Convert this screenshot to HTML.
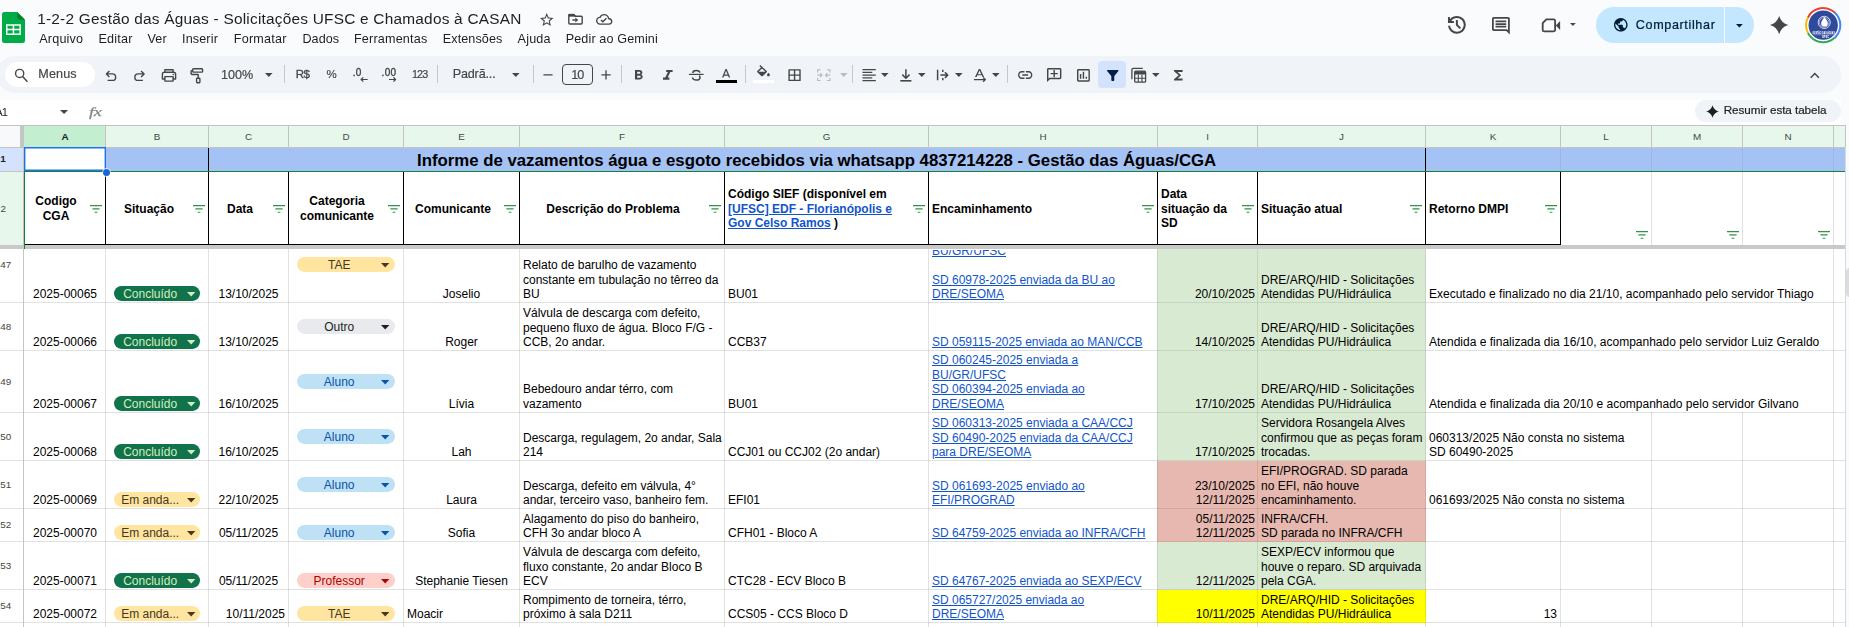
<!DOCTYPE html>
<html lang="pt-BR"><head><meta charset="utf-8"><title>1-2-2 Gestão das Águas - Solicitações UFSC e Chamados à CASAN</title>
<style>
*{box-sizing:border-box;margin:0;padding:0}
html,body{width:1849px;height:627px;overflow:hidden;background:#f9fbfd;font-family:"Liberation Sans",sans-serif;color:#1f1f1f}
#root{position:relative;width:1849px;height:627px;overflow:hidden;background:#f9fbfd}
#chrome{position:absolute;left:0;top:0;width:1849px;height:125px;will-change:transform}
.abs{position:absolute}
.ic{position:absolute;display:block;overflow:visible}
.t{position:absolute;white-space:nowrap}
.sep{position:absolute;top:65px;width:1px;height:18px;background:#c7c7c7}
.cell{position:absolute;display:flex;align-items:flex-end;font-size:12px;line-height:14px;color:#000;padding:0 3px 1px 3px;overflow:hidden;white-space:nowrap}
.ln{height:14px;line-height:14px}
.cell.c{justify-content:center;text-align:center}
.cell.r{justify-content:flex-end;text-align:right}
.cell a,.lnk{color:#1155cc;text-decoration:underline}
.hl{position:absolute;height:1px}
.vl{position:absolute;width:1px}
.ct{position:absolute;height:14px;font-size:12px;line-height:14px;text-align:center;white-space:nowrap}
.colh{position:absolute;top:126px;height:21px}
.rowh{position:absolute;left:0;width:23px;background:#e8f7ec}
.hd{position:absolute;height:14px;font-size:12px;line-height:14px;font-weight:bold;color:#000;white-space:nowrap}
.fic{position:absolute;width:12px;height:8px}
</style></head><body><div id="root">

<div class="abs" style="left:0;top:126px;width:1845px;height:501px;background:#fff"></div>
<div class="abs" style="left:1845px;top:126px;width:4px;height:501px;background:#f9fbfd"></div>
<div class="abs" style="left:1845px;top:126px;width:1px;height:501px;background:#d9d9d9"></div>
<div class="abs" style="left:1846px;top:268px;width:10px;height:29px;border-radius:4px;background:#dadce0"></div>
<div class="abs" style="left:0;top:126px;width:21px;height:21px;background:#f8f9fa"></div>
<div class="colh" style="left:24px;width:81px;background:#c3eed0"></div>
<div class="t" id="chA" style="left:61.53px;top:131px;font-size:9.9px;line-height:11.88px;color:#202124;letter-spacing:-0.01px;font-weight:bold;">A</div>
<div class="colh" style="left:105px;width:103px;background:#e8f7ec"></div>
<div class="t" id="chB" style="left:153.8px;top:131px;font-size:9.9px;line-height:11.88px;color:#444746;letter-spacing:-0.004px;">B</div>
<div class="colh" style="left:208px;width:80px;background:#e8f7ec"></div>
<div class="t" id="chC" style="left:245.03px;top:131px;font-size:9.9px;line-height:11.88px;color:#444746;letter-spacing:-0.01px;">C</div>
<div class="colh" style="left:288px;width:115px;background:#e8f7ec"></div>
<div class="t" id="chD" style="left:342.53px;top:131px;font-size:9.9px;line-height:11.88px;color:#444746;letter-spacing:-0.01px;">D</div>
<div class="colh" style="left:403px;width:116px;background:#e8f7ec"></div>
<div class="t" id="chE" style="left:458.3px;top:131px;font-size:9.9px;line-height:11.88px;color:#444746;letter-spacing:-0.004px;">E</div>
<div class="colh" style="left:519px;width:205px;background:#e8f7ec"></div>
<div class="t" id="chF" style="left:619.08px;top:131px;font-size:9.9px;line-height:11.88px;color:#444746;letter-spacing:-0.008px;">F</div>
<div class="colh" style="left:724px;width:204px;background:#e8f7ec"></div>
<div class="t" id="chG" style="left:822.75px;top:131px;font-size:9.9px;line-height:11.88px;color:#444746;letter-spacing:-0.0px;">G</div>
<div class="colh" style="left:928px;width:229px;background:#e8f7ec"></div>
<div class="t" id="chH" style="left:1039.53px;top:131px;font-size:9.9px;line-height:11.88px;color:#444746;letter-spacing:-0.01px;">H</div>
<div class="colh" style="left:1157px;width:100px;background:#e8f7ec"></div>
<div class="t" id="chI" style="left:1206.22px;top:131px;font-size:9.9px;line-height:11.88px;color:#444746;letter-spacing:0.01px;">I</div>
<div class="colh" style="left:1257px;width:168px;background:#e8f7ec"></div>
<div class="t" id="chJ" style="left:1339.12px;top:131px;font-size:9.9px;line-height:11.88px;color:#444746;letter-spacing:0.0px;">J</div>
<div class="colh" style="left:1425px;width:135px;background:#e8f7ec"></div>
<div class="t" id="chK" style="left:1489.8px;top:131px;font-size:9.9px;line-height:11.88px;color:#444746;letter-spacing:-0.004px;">K</div>
<div class="colh" style="left:1560px;width:91px;background:#e8f7ec"></div>
<div class="t" id="chL" style="left:1603.35px;top:131px;font-size:9.9px;line-height:11.88px;color:#444746;letter-spacing:-0.006px;">L</div>
<div class="colh" style="left:1651px;width:91px;background:#e8f7ec"></div>
<div class="t" id="chM" style="left:1692.98px;top:131px;font-size:9.9px;line-height:11.88px;color:#444746;letter-spacing:-0.007px;">M</div>
<div class="colh" style="left:1742px;width:91px;background:#e8f7ec"></div>
<div class="t" id="chN" style="left:1784.53px;top:131px;font-size:9.9px;line-height:11.88px;color:#444746;letter-spacing:-0.01px;">N</div>
<div class="colh" style="left:1833px;width:12px;background:#e8f7ec"></div>
<div class="vl" style="left:105px;top:126px;height:21px;background:#c4c4c4"></div>
<div class="vl" style="left:208px;top:126px;height:21px;background:#c4c4c4"></div>
<div class="vl" style="left:288px;top:126px;height:21px;background:#c4c4c4"></div>
<div class="vl" style="left:403px;top:126px;height:21px;background:#c4c4c4"></div>
<div class="vl" style="left:519px;top:126px;height:21px;background:#c4c4c4"></div>
<div class="vl" style="left:724px;top:126px;height:21px;background:#c4c4c4"></div>
<div class="vl" style="left:928px;top:126px;height:21px;background:#c4c4c4"></div>
<div class="vl" style="left:1157px;top:126px;height:21px;background:#c4c4c4"></div>
<div class="vl" style="left:1257px;top:126px;height:21px;background:#c4c4c4"></div>
<div class="vl" style="left:1425px;top:126px;height:21px;background:#c4c4c4"></div>
<div class="vl" style="left:1560px;top:126px;height:21px;background:#c4c4c4"></div>
<div class="vl" style="left:1651px;top:126px;height:21px;background:#c4c4c4"></div>
<div class="vl" style="left:1742px;top:126px;height:21px;background:#c4c4c4"></div>
<div class="vl" style="left:1833px;top:126px;height:21px;background:#c4c4c4"></div>
<div class="vl" style="left:1845px;top:126px;height:21px;background:#c4c4c4"></div>
<div class="hl" style="left:0;top:125px;width:1846px;background:#c4c4c4"></div>
<div class="hl" style="left:0;top:147px;width:1845px;background:#c4c4c4"></div>
<div class="rowh" style="top:148px;height:23px;background:#d3e3fd"></div>
<div class="rowh" style="top:172px;height:73px"></div>
<div class="t" id="rh1" style="left:0.3px;top:153px;font-size:9.9px;line-height:11.88px;color:#202124;letter-spacing:-0.006px;font-weight:bold;">1</div>
<div class="t" id="rh2" style="left:0.5px;top:203px;font-size:9.9px;line-height:11.88px;color:#444746;letter-spacing:-0.006px;">2</div>
<div class="hl" style="left:0;top:171px;width:23px;background:#c4c4c4"></div>
<div class="rowh" style="top:250px;height:52px;background:#fff"></div>
<div class="hl" style="left:0;top:302px;width:1845px;background:rgba(0,0,0,0.118)"></div>
<div class="t" id="rh47" style="left:-5.2px;top:259px;font-size:9.9px;line-height:11.88px;color:#444746;letter-spacing:-0.006px;">247</div>
<div class="rowh" style="top:303px;height:47px;background:#fff"></div>
<div class="hl" style="left:0;top:350px;width:1845px;background:rgba(0,0,0,0.118)"></div>
<div class="t" id="rh48" style="left:-5.2px;top:321px;font-size:9.9px;line-height:11.88px;color:#444746;letter-spacing:-0.006px;">248</div>
<div class="rowh" style="top:351px;height:61px;background:#fff"></div>
<div class="hl" style="left:0;top:412px;width:1845px;background:rgba(0,0,0,0.118)"></div>
<div class="t" id="rh49" style="left:-5.2px;top:376px;font-size:9.9px;line-height:11.88px;color:#444746;letter-spacing:-0.006px;">249</div>
<div class="rowh" style="top:413px;height:47px;background:#fff"></div>
<div class="hl" style="left:0;top:460px;width:1845px;background:rgba(0,0,0,0.118)"></div>
<div class="t" id="rh50" style="left:-5.2px;top:431px;font-size:9.9px;line-height:11.88px;color:#444746;letter-spacing:-0.006px;">250</div>
<div class="rowh" style="top:461px;height:47px;background:#fff"></div>
<div class="hl" style="left:0;top:508px;width:1845px;background:rgba(0,0,0,0.118)"></div>
<div class="t" id="rh51" style="left:-5.2px;top:479px;font-size:9.9px;line-height:11.88px;color:#444746;letter-spacing:-0.006px;">251</div>
<div class="rowh" style="top:509px;height:32px;background:#fff"></div>
<div class="hl" style="left:0;top:541px;width:1845px;background:rgba(0,0,0,0.118)"></div>
<div class="t" id="rh52" style="left:-5.2px;top:519px;font-size:9.9px;line-height:11.88px;color:#444746;letter-spacing:-0.006px;">252</div>
<div class="rowh" style="top:542px;height:47px;background:#fff"></div>
<div class="hl" style="left:0;top:589px;width:1845px;background:rgba(0,0,0,0.118)"></div>
<div class="t" id="rh53" style="left:-5.2px;top:560px;font-size:9.9px;line-height:11.88px;color:#444746;letter-spacing:-0.006px;">253</div>
<div class="rowh" style="top:590px;height:32px;background:#fff"></div>
<div class="hl" style="left:0;top:622px;width:1845px;background:rgba(0,0,0,0.118)"></div>
<div class="t" id="rh54" style="left:-5.2px;top:600px;font-size:9.9px;line-height:11.88px;color:#444746;letter-spacing:-0.006px;">254</div>
<div class="rowh" style="top:623px;height:27px;background:#fff"></div>
<div class="hl" style="left:0;top:650px;width:1845px;background:rgba(0,0,0,0.118)"></div>
<div class="t" id="rh55" style="left:-5.2px;top:631px;font-size:9.9px;line-height:11.88px;color:#444746;letter-spacing:-0.006px;">255</div>
<div class="abs" style="left:20.300px;top:126px;width:3.400px;height:21px;background:#c4c4c4"></div>
<div class="vl" style="left:23px;top:148px;height:97px;background:#c4c4c4"></div>
<div class="vl" style="left:23px;top:249px;height:378px;background:#c4c4c4"></div>
<div class="abs" style="left:24px;top:148px;width:1821px;height:23px;background:#a4c2f4"></div>
<div class="vl" style="left:1560px;top:148px;height:23px;background:#9cb6e4"></div>
<div class="vl" style="left:1651px;top:148px;height:23px;background:#9cb6e4"></div>
<div class="vl" style="left:1742px;top:148px;height:23px;background:#9cb6e4"></div>
<div class="vl" style="left:1833px;top:148px;height:23px;background:#9cb6e4"></div>
<div class="abs" style="left:208px;top:148px;width:1px;height:23px;background:#000"></div>
<div class="abs" style="left:1425px;top:148px;width:1px;height:23px;background:#000"></div>
<div class="t" id="r1title" style="left:417px;top:151px;font-size:16.8px;line-height:20.16px;color:#000;letter-spacing:-0.001px;font-weight:bold;">Informe de vazamentos água e esgoto recebidos via whatsapp 4837214228 - Gestão das Águas/CGA</div>
<div class="abs" style="left:106px;top:171px;width:1739px;height:1px;background:#188038"></div>
<div class="abs" style="left:24px;top:171px;width:82px;height:74px;border:1px solid #000;border-top:none;background:#fff"></div>
<div class="hd" style="left:-44px;top:194px;width:200px;text-align:center">Codigo</div>
<div class="hd" style="left:-44px;top:209px;width:200px;text-align:center">CGA</div>
<svg class="fic" style="left:90px;top:205px" viewBox="0 0 12 8"><path d="M0 .600h12M2.400 3.900h7.200M4.600 7.200h2.800" stroke="#2f9448" stroke-width="1.100" fill="none"/></svg>
<div class="abs" style="left:105px;top:171px;width:104px;height:74px;border:1px solid #000;border-top:none;background:#fff"></div>
<div class="hd" style="left:49px;top:202px;width:200px;text-align:center">Situação</div>
<svg class="fic" style="left:193px;top:205px" viewBox="0 0 12 8"><path d="M0 .600h12M2.400 3.900h7.200M4.600 7.200h2.800" stroke="#2f9448" stroke-width="1.100" fill="none"/></svg>
<div class="abs" style="left:208px;top:171px;width:81px;height:74px;border:1px solid #000;border-top:none;background:#fff"></div>
<div class="hd" style="left:140px;top:202px;width:200px;text-align:center">Data</div>
<svg class="fic" style="left:273px;top:205px" viewBox="0 0 12 8"><path d="M0 .600h12M2.400 3.900h7.200M4.600 7.200h2.800" stroke="#2f9448" stroke-width="1.100" fill="none"/></svg>
<div class="abs" style="left:288px;top:171px;width:116px;height:74px;border:1px solid #000;border-top:none;background:#fff"></div>
<div class="hd" style="left:237px;top:194px;width:200px;text-align:center">Categoria</div>
<div class="hd" style="left:237px;top:209px;width:200px;text-align:center">comunicante</div>
<svg class="fic" style="left:388px;top:205px" viewBox="0 0 12 8"><path d="M0 .600h12M2.400 3.900h7.200M4.600 7.200h2.800" stroke="#2f9448" stroke-width="1.100" fill="none"/></svg>
<div class="abs" style="left:403px;top:171px;width:117px;height:74px;border:1px solid #000;border-top:none;background:#fff"></div>
<div class="hd" style="left:353px;top:202px;width:200px;text-align:center">Comunicante</div>
<svg class="fic" style="left:504px;top:205px" viewBox="0 0 12 8"><path d="M0 .600h12M2.400 3.900h7.200M4.600 7.200h2.800" stroke="#2f9448" stroke-width="1.100" fill="none"/></svg>
<div class="abs" style="left:519px;top:171px;width:206px;height:74px;border:1px solid #000;border-top:none;background:#fff"></div>
<div class="hd" style="left:513px;top:202px;width:200px;text-align:center">Descrição do Problema</div>
<svg class="fic" style="left:709px;top:205px" viewBox="0 0 12 8"><path d="M0 .600h12M2.400 3.900h7.200M4.600 7.200h2.800" stroke="#2f9448" stroke-width="1.100" fill="none"/></svg>
<div class="abs" style="left:724px;top:171px;width:205px;height:74px;border:1px solid #000;border-top:none;background:#fff"></div>
<div class="hd" style="left:728px;top:187px">Código SIEF (disponível em</div>
<div class="hd" style="left:728px;top:202px"><span class="lnk">[UFSC] EDF - Florianópolis e</span></div>
<div class="hd" style="left:728px;top:216px"><span class="lnk">Gov Celso Ramos</span> )</div>
<svg class="fic" style="left:913px;top:205px" viewBox="0 0 12 8"><path d="M0 .600h12M2.400 3.900h7.200M4.600 7.200h2.800" stroke="#2f9448" stroke-width="1.100" fill="none"/></svg>
<div class="abs" style="left:928px;top:171px;width:230px;height:74px;border:1px solid #000;border-top:none;background:#fff"></div>
<div class="hd" style="left:932px;top:202px">Encaminhamento</div>
<svg class="fic" style="left:1142px;top:205px" viewBox="0 0 12 8"><path d="M0 .600h12M2.400 3.900h7.200M4.600 7.200h2.800" stroke="#2f9448" stroke-width="1.100" fill="none"/></svg>
<div class="abs" style="left:1157px;top:171px;width:101px;height:74px;border:1px solid #000;border-top:none;background:#fff"></div>
<div class="hd" style="left:1161px;top:187px">Data</div>
<div class="hd" style="left:1161px;top:202px">situação da</div>
<div class="hd" style="left:1161px;top:216px">SD</div>
<svg class="fic" style="left:1242px;top:205px" viewBox="0 0 12 8"><path d="M0 .600h12M2.400 3.900h7.200M4.600 7.200h2.800" stroke="#2f9448" stroke-width="1.100" fill="none"/></svg>
<div class="abs" style="left:1257px;top:171px;width:169px;height:74px;border:1px solid #000;border-top:none;background:#fff"></div>
<div class="hd" style="left:1261px;top:202px">Situação atual</div>
<svg class="fic" style="left:1410px;top:205px" viewBox="0 0 12 8"><path d="M0 .600h12M2.400 3.900h7.200M4.600 7.200h2.800" stroke="#2f9448" stroke-width="1.100" fill="none"/></svg>
<div class="abs" style="left:1425px;top:171px;width:136px;height:74px;border:1px solid #000;border-top:none;background:#fff"></div>
<div class="hd" style="left:1429px;top:202px">Retorno DMPI</div>
<svg class="fic" style="left:1545px;top:205px" viewBox="0 0 12 8"><path d="M0 .600h12M2.400 3.900h7.200M4.600 7.200h2.800" stroke="#2f9448" stroke-width="1.100" fill="none"/></svg>
<div class="abs" style="left:24px;top:171px;width:1px;height:78px;background:#188038"></div>
<div class="vl" style="left:1651px;top:172px;height:73px;background:rgba(0,0,0,0.118)"></div>
<svg class="fic" style="left:1636px;top:231px" viewBox="0 0 12 8"><path d="M0 .600h12M2.400 3.900h7.200M4.600 7.200h2.800" stroke="#2f9448" stroke-width="1.100" fill="none"/></svg>
<div class="vl" style="left:1742px;top:172px;height:73px;background:rgba(0,0,0,0.118)"></div>
<svg class="fic" style="left:1727px;top:231px" viewBox="0 0 12 8"><path d="M0 .600h12M2.400 3.900h7.200M4.600 7.200h2.800" stroke="#2f9448" stroke-width="1.100" fill="none"/></svg>
<div class="vl" style="left:1833px;top:172px;height:73px;background:rgba(0,0,0,0.118)"></div>
<svg class="fic" style="left:1818px;top:231px" viewBox="0 0 12 8"><path d="M0 .600h12M2.400 3.900h7.200M4.600 7.200h2.800" stroke="#2f9448" stroke-width="1.100" fill="none"/></svg>
<div class="abs" style="left:106px;top:171px;width:1455px;height:1px;background:#188038"></div>
<div class="abs" style="left:0;top:245px;width:1845px;height:4px;background:#c9c9c9"></div>
<div class="abs" style="left:24px;top:172px;width:1px;height:77px;background:#188038"></div>
<div class="vl" style="left:105px;top:249px;height:378px;background:rgba(0,0,0,0.118)"></div>
<div class="vl" style="left:208px;top:249px;height:378px;background:rgba(0,0,0,0.118)"></div>
<div class="vl" style="left:288px;top:249px;height:378px;background:rgba(0,0,0,0.118)"></div>
<div class="vl" style="left:403px;top:249px;height:378px;background:rgba(0,0,0,0.118)"></div>
<div class="vl" style="left:519px;top:249px;height:378px;background:rgba(0,0,0,0.118)"></div>
<div class="vl" style="left:724px;top:249px;height:378px;background:rgba(0,0,0,0.118)"></div>
<div class="vl" style="left:928px;top:249px;height:378px;background:rgba(0,0,0,0.118)"></div>
<div class="vl" style="left:1157px;top:249px;height:378px;background:rgba(0,0,0,0.118)"></div>
<div class="vl" style="left:1257px;top:249px;height:378px;background:rgba(0,0,0,0.118)"></div>
<div class="vl" style="left:1425px;top:249px;height:378px;background:rgba(0,0,0,0.118)"></div>
<div class="vl" style="left:1833px;top:249px;height:378px;background:rgba(0,0,0,0.118)"></div>
<div class="abs" style="left:1157px;top:249px;width:269px;height:54px;background:#d9ead3"></div>
<div class="hl" style="left:1157px;top:302px;width:269px;background:rgba(0,0,0,0.085)"></div>
<div class="abs" style="left:1157px;top:303px;width:269px;height:48px;background:#d9ead3"></div>
<div class="hl" style="left:1157px;top:350px;width:269px;background:rgba(0,0,0,0.085)"></div>
<div class="abs" style="left:1157px;top:351px;width:269px;height:62px;background:#d9ead3"></div>
<div class="hl" style="left:1157px;top:412px;width:269px;background:rgba(0,0,0,0.085)"></div>
<div class="abs" style="left:1157px;top:413px;width:269px;height:48px;background:#d9ead3"></div>
<div class="hl" style="left:1157px;top:460px;width:269px;background:rgba(0,0,0,0.085)"></div>
<div class="abs" style="left:1157px;top:461px;width:269px;height:48px;background:#e6b8af"></div>
<div class="hl" style="left:1157px;top:508px;width:269px;background:rgba(0,0,0,0.085)"></div>
<div class="abs" style="left:1157px;top:509px;width:269px;height:33px;background:#e6b8af"></div>
<div class="hl" style="left:1157px;top:541px;width:269px;background:rgba(0,0,0,0.085)"></div>
<div class="abs" style="left:1157px;top:542px;width:269px;height:48px;background:#d9ead3"></div>
<div class="hl" style="left:1157px;top:589px;width:269px;background:rgba(0,0,0,0.085)"></div>
<div class="abs" style="left:1157px;top:590px;width:269px;height:33px;background:#ffff00"></div>
<div class="hl" style="left:1157px;top:622px;width:269px;background:rgba(0,0,0,0.085)"></div>
<div class="vl" style="left:1157px;top:249px;height:374px;background:rgba(0,0,0,0.085)"></div>
<div class="vl" style="left:1257px;top:249px;height:374px;background:rgba(0,0,0,0.085)"></div>
<div class="vl" style="left:1425px;top:249px;height:374px;background:rgba(0,0,0,0.085)"></div>
<div class="cell c" style="left:25px;top:250px;width:80px;height:52px;"><div><div class="ln">2025-00065</div></div></div>
<div class="abs" style="left:114px;top:286.00px;width:86.30px;height:14.8px;border-radius:7.4px;background:#11734b"></div><div class="ct" style="left:119px;width:62.40px;top:287px;color:#d4edbc">Concluído</div><svg class="ic" style="left:187.00px;top:291.50px;width:8.4px;height:4.4px" viewBox="0 0 10 5" preserveAspectRatio="none" fill="#d4edbc"><path d="M0 0h10L5 5z"/></svg>
<div class="cell c" style="left:209px;top:250px;width:79px;height:52px;"><div><div class="ln">13/10/2025</div></div></div>
<div class="abs" style="left:297.1px;top:257.30px;width:98.00px;height:14.8px;border-radius:7.4px;background:#ffe5a0"></div><div class="ct" style="left:303px;width:72.40px;top:258px;color:#473821">TAE</div><svg class="ic" style="left:381.30px;top:262.80px;width:8.4px;height:4.4px" viewBox="0 0 10 5" preserveAspectRatio="none" fill="#473821"><path d="M0 0h10L5 5z"/></svg>
<div class="cell c" style="left:404px;top:250px;width:115px;height:52px;"><div><div class="ln">Joselio</div></div></div>
<div class="cell" style="left:520px;top:250px;width:204px;height:52px;"><div><div class="ln" style="margin-bottom:1px">Relato de barulho de vazamento</div><div class="ln">constante em tubulação no têrreo da</div><div class="ln">BU</div></div></div>
<div class="cell" style="left:725px;top:250px;width:203px;height:52px;"><div><div class="ln">BU01</div></div></div>
<div class="cell" style="left:929px;top:250px;width:228px;height:52px;"><div><div class="ln"><a>BU/GR/UFSC</a></div><div class="ln" style="margin-bottom:1px">&nbsp;</div><div class="ln"><a>SD 60978-2025 enviada da BU ao</a></div><div class="ln"><a>DRE/SEOMA</a></div></div></div>
<div class="cell r" style="left:1158px;top:250px;width:99px;height:52px;padding-right:2px;"><div><div class="ln">20/10/2025</div></div></div>
<div class="cell" style="left:1258px;top:250px;width:167px;height:52px;"><div><div class="ln">DRE/ARQ/HID - Solicitações</div><div class="ln">Atendidas PU/Hidráulica</div></div></div>
<div class="cell" style="left:1426px;top:250px;width:407px;height:52px;"><div><div class="ln">Executado e finalizado no dia 21/10, acompanhado pelo servidor Thiago</div></div></div>
<div class="cell c" style="left:25px;top:303px;width:80px;height:47px;"><div><div class="ln">2025-00066</div></div></div>
<div class="abs" style="left:114px;top:334.00px;width:86.30px;height:14.8px;border-radius:7.4px;background:#11734b"></div><div class="ct" style="left:119px;width:62.40px;top:335px;color:#d4edbc">Concluído</div><svg class="ic" style="left:187.00px;top:339.50px;width:8.4px;height:4.4px" viewBox="0 0 10 5" preserveAspectRatio="none" fill="#d4edbc"><path d="M0 0h10L5 5z"/></svg>
<div class="cell c" style="left:209px;top:303px;width:79px;height:47px;"><div><div class="ln">13/10/2025</div></div></div>
<div class="abs" style="left:297.1px;top:319.15px;width:98.00px;height:14.8px;border-radius:7.4px;background:#e8eaed"></div><div class="ct" style="left:303px;width:72.40px;top:320px;color:#1f1f1f">Outro</div><svg class="ic" style="left:381.30px;top:324.65px;width:8.4px;height:4.4px" viewBox="0 0 10 5" preserveAspectRatio="none" fill="#1f1f1f"><path d="M0 0h10L5 5z"/></svg>
<div class="cell c" style="left:404px;top:303px;width:115px;height:47px;"><div><div class="ln">Roger</div></div></div>
<div class="cell" style="left:520px;top:303px;width:204px;height:47px;"><div><div class="ln" style="margin-bottom:1px">Válvula de descarga com defeito,</div><div class="ln">pequeno fluxo de água. Bloco F/G -</div><div class="ln">CCB, 2o andar.</div></div></div>
<div class="cell" style="left:725px;top:303px;width:203px;height:47px;"><div><div class="ln">CCB37</div></div></div>
<div class="cell" style="left:929px;top:303px;width:228px;height:47px;"><div><div class="ln"><a>SD 059115-2025 enviada ao MAN/CCB</a></div></div></div>
<div class="cell r" style="left:1158px;top:303px;width:99px;height:47px;padding-right:2px;"><div><div class="ln">14/10/2025</div></div></div>
<div class="cell" style="left:1258px;top:303px;width:167px;height:47px;"><div><div class="ln">DRE/ARQ/HID - Solicitações</div><div class="ln">Atendidas PU/Hidráulica</div></div></div>
<div class="cell" style="left:1426px;top:303px;width:407px;height:47px;"><div><div class="ln">Atendida e finalizada dia 16/10, acompanhado pelo servidor Luiz Geraldo</div></div></div>
<div class="cell c" style="left:25px;top:351px;width:80px;height:61px;"><div><div class="ln">2025-00067</div></div></div>
<div class="abs" style="left:114px;top:396.00px;width:86.30px;height:14.8px;border-radius:7.4px;background:#11734b"></div><div class="ct" style="left:119px;width:62.40px;top:397px;color:#d4edbc">Concluído</div><svg class="ic" style="left:187.00px;top:401.50px;width:8.4px;height:4.4px" viewBox="0 0 10 5" preserveAspectRatio="none" fill="#d4edbc"><path d="M0 0h10L5 5z"/></svg>
<div class="cell c" style="left:209px;top:351px;width:79px;height:61px;"><div><div class="ln">16/10/2025</div></div></div>
<div class="abs" style="left:297.1px;top:374.15px;width:98.00px;height:14.8px;border-radius:7.4px;background:#bfe1f6"></div><div class="ct" style="left:303px;width:72.40px;top:375px;color:#0a53a8">Aluno</div><svg class="ic" style="left:381.30px;top:379.65px;width:8.4px;height:4.4px" viewBox="0 0 10 5" preserveAspectRatio="none" fill="#0a53a8"><path d="M0 0h10L5 5z"/></svg>
<div class="cell c" style="left:404px;top:351px;width:115px;height:61px;"><div><div class="ln">Lívia</div></div></div>
<div class="cell" style="left:520px;top:351px;width:204px;height:61px;"><div><div class="ln" style="margin-bottom:1px">Bebedouro andar térro, com</div><div class="ln">vazamento</div></div></div>
<div class="cell" style="left:725px;top:351px;width:203px;height:61px;"><div><div class="ln">BU01</div></div></div>
<div class="cell" style="left:929px;top:351px;width:228px;height:61px;"><div><div class="ln" style="margin-bottom:1px"><a>SD 060245-2025 enviada a</a></div><div class="ln"><a>BU/GR/UFSC</a></div><div class="ln" style="margin-bottom:1px"><a>SD 060394-2025 enviada ao</a></div><div class="ln"><a>DRE/SEOMA</a></div></div></div>
<div class="cell r" style="left:1158px;top:351px;width:99px;height:61px;padding-right:2px;"><div><div class="ln">17/10/2025</div></div></div>
<div class="cell" style="left:1258px;top:351px;width:167px;height:61px;"><div><div class="ln" style="margin-bottom:1px">DRE/ARQ/HID - Solicitações</div><div class="ln">Atendidas PU/Hidráulica</div></div></div>
<div class="cell" style="left:1426px;top:351px;width:407px;height:61px;"><div><div class="ln">Atendida e finalizada dia 20/10 e acompanhado pelo servidor Gilvano</div></div></div>
<div class="vl" style="left:1651px;top:412px;height:48px;background:rgba(0,0,0,0.118)"></div>
<div class="vl" style="left:1742px;top:412px;height:48px;background:rgba(0,0,0,0.118)"></div>
<div class="cell c" style="left:25px;top:413px;width:80px;height:47px;"><div><div class="ln">2025-00068</div></div></div>
<div class="abs" style="left:114px;top:444.00px;width:86.30px;height:14.8px;border-radius:7.4px;background:#11734b"></div><div class="ct" style="left:119px;width:62.40px;top:445px;color:#d4edbc">Concluído</div><svg class="ic" style="left:187.00px;top:449.50px;width:8.4px;height:4.4px" viewBox="0 0 10 5" preserveAspectRatio="none" fill="#d4edbc"><path d="M0 0h10L5 5z"/></svg>
<div class="cell c" style="left:209px;top:413px;width:79px;height:47px;"><div><div class="ln">16/10/2025</div></div></div>
<div class="abs" style="left:297.1px;top:429.15px;width:98.00px;height:14.8px;border-radius:7.4px;background:#bfe1f6"></div><div class="ct" style="left:303px;width:72.40px;top:430px;color:#0a53a8">Aluno</div><svg class="ic" style="left:381.30px;top:434.65px;width:8.4px;height:4.4px" viewBox="0 0 10 5" preserveAspectRatio="none" fill="#0a53a8"><path d="M0 0h10L5 5z"/></svg>
<div class="cell c" style="left:404px;top:413px;width:115px;height:47px;"><div><div class="ln">Lah</div></div></div>
<div class="cell" style="left:520px;top:413px;width:204px;height:47px;"><div><div class="ln">Descarga, regulagem, 2o andar, Sala</div><div class="ln">214</div></div></div>
<div class="cell" style="left:725px;top:413px;width:203px;height:47px;"><div><div class="ln">CCJ01 ou CCJ02 (2o andar)</div></div></div>
<div class="cell" style="left:929px;top:413px;width:228px;height:47px;"><div><div class="ln" style="margin-bottom:1px"><a>SD 060313-2025 enviada a CAA/CCJ</a></div><div class="ln"><a>SD 60490-2025 enviada da CAA/CCJ</a></div><div class="ln"><a>para DRE/SEOMA</a></div></div></div>
<div class="cell r" style="left:1158px;top:413px;width:99px;height:47px;padding-right:2px;"><div><div class="ln">17/10/2025</div></div></div>
<div class="cell" style="left:1258px;top:413px;width:167px;height:47px;"><div><div class="ln" style="margin-bottom:1px">Servidora Rosangela Alves</div><div class="ln">confirmou que as peças foram</div><div class="ln">trocadas.</div></div></div>
<div class="cell" style="left:1426px;top:413px;width:225px;height:47px;"><div><div class="ln">060313/2025 Não consta no sistema</div><div class="ln">SD 60490-2025</div></div></div>
<div class="vl" style="left:1651px;top:460px;height:48px;background:rgba(0,0,0,0.118)"></div>
<div class="vl" style="left:1742px;top:460px;height:48px;background:rgba(0,0,0,0.118)"></div>
<div class="cell c" style="left:25px;top:461px;width:80px;height:47px;"><div><div class="ln">2025-00069</div></div></div>
<div class="abs" style="left:114px;top:492.00px;width:86.30px;height:14.8px;border-radius:7.4px;background:#ffe5a0"></div><div class="ct" style="left:119px;width:62.40px;top:493px;color:#473821">Em anda...</div><svg class="ic" style="left:187.00px;top:497.50px;width:8.4px;height:4.4px" viewBox="0 0 10 5" preserveAspectRatio="none" fill="#473821"><path d="M0 0h10L5 5z"/></svg>
<div class="cell c" style="left:209px;top:461px;width:79px;height:47px;"><div><div class="ln">22/10/2025</div></div></div>
<div class="abs" style="left:297.1px;top:477.15px;width:98.00px;height:14.8px;border-radius:7.4px;background:#bfe1f6"></div><div class="ct" style="left:303px;width:72.40px;top:478px;color:#0a53a8">Aluno</div><svg class="ic" style="left:381.30px;top:482.65px;width:8.4px;height:4.4px" viewBox="0 0 10 5" preserveAspectRatio="none" fill="#0a53a8"><path d="M0 0h10L5 5z"/></svg>
<div class="cell c" style="left:404px;top:461px;width:115px;height:47px;"><div><div class="ln">Laura</div></div></div>
<div class="cell" style="left:520px;top:461px;width:204px;height:47px;"><div><div class="ln">Descarga, defeito em válvula, 4°</div><div class="ln">andar, terceiro vaso, banheiro fem.</div></div></div>
<div class="cell" style="left:725px;top:461px;width:203px;height:47px;"><div><div class="ln">EFI01</div></div></div>
<div class="cell" style="left:929px;top:461px;width:228px;height:47px;"><div><div class="ln"><a>SD 061693-2025 enviado ao</a></div><div class="ln"><a>EFI/PROGRAD</a></div></div></div>
<div class="cell r" style="left:1158px;top:461px;width:99px;height:47px;padding-right:2px;"><div><div class="ln">23/10/2025</div><div class="ln">12/11/2025</div></div></div>
<div class="cell" style="left:1258px;top:461px;width:167px;height:47px;"><div><div class="ln" style="margin-bottom:1px">EFI/PROGRAD. SD parada</div><div class="ln">no EFI, não houve</div><div class="ln">encaminhamento.</div></div></div>
<div class="cell" style="left:1426px;top:461px;width:225px;height:47px;"><div><div class="ln">061693/2025 Não consta no sistema</div></div></div>
<div class="vl" style="left:1560px;top:508px;height:33px;background:rgba(0,0,0,0.118)"></div>
<div class="vl" style="left:1651px;top:508px;height:33px;background:rgba(0,0,0,0.118)"></div>
<div class="vl" style="left:1742px;top:508px;height:33px;background:rgba(0,0,0,0.118)"></div>
<div class="cell c" style="left:25px;top:509px;width:80px;height:32px;"><div><div class="ln">2025-00070</div></div></div>
<div class="abs" style="left:114px;top:525.00px;width:86.30px;height:14.8px;border-radius:7.4px;background:#ffe5a0"></div><div class="ct" style="left:119px;width:62.40px;top:526px;color:#473821">Em anda...</div><svg class="ic" style="left:187.00px;top:530.50px;width:8.4px;height:4.4px" viewBox="0 0 10 5" preserveAspectRatio="none" fill="#473821"><path d="M0 0h10L5 5z"/></svg>
<div class="cell c" style="left:209px;top:509px;width:79px;height:32px;"><div><div class="ln">05/11/2025</div></div></div>
<div class="abs" style="left:297.1px;top:525.40px;width:98.00px;height:14.8px;border-radius:7.4px;background:#bfe1f6"></div><div class="ct" style="left:303px;width:72.40px;top:526px;color:#0a53a8">Aluno</div><svg class="ic" style="left:381.30px;top:530.90px;width:8.4px;height:4.4px" viewBox="0 0 10 5" preserveAspectRatio="none" fill="#0a53a8"><path d="M0 0h10L5 5z"/></svg>
<div class="cell c" style="left:404px;top:509px;width:115px;height:32px;"><div><div class="ln">Sofia</div></div></div>
<div class="cell" style="left:520px;top:509px;width:204px;height:32px;"><div><div class="ln">Alagamento do piso do banheiro,</div><div class="ln">CFH 3o andar bloco A</div></div></div>
<div class="cell" style="left:725px;top:509px;width:203px;height:32px;"><div><div class="ln">CFH01 - Bloco A</div></div></div>
<div class="cell" style="left:929px;top:509px;width:228px;height:32px;"><div><div class="ln"><a>SD 64759-2025 enviada ao INFRA/CFH</a></div></div></div>
<div class="cell r" style="left:1158px;top:509px;width:99px;height:32px;padding-right:2px;"><div><div class="ln">05/11/2025</div><div class="ln">12/11/2025</div></div></div>
<div class="cell" style="left:1258px;top:509px;width:167px;height:32px;"><div><div class="ln">INFRA/CFH.</div><div class="ln">SD parada no INFRA/CFH</div></div></div>
<div class="vl" style="left:1560px;top:541px;height:48px;background:rgba(0,0,0,0.118)"></div>
<div class="vl" style="left:1651px;top:541px;height:48px;background:rgba(0,0,0,0.118)"></div>
<div class="vl" style="left:1742px;top:541px;height:48px;background:rgba(0,0,0,0.118)"></div>
<div class="cell c" style="left:25px;top:542px;width:80px;height:47px;"><div><div class="ln">2025-00071</div></div></div>
<div class="abs" style="left:114px;top:573.00px;width:86.30px;height:14.8px;border-radius:7.4px;background:#11734b"></div><div class="ct" style="left:119px;width:62.40px;top:574px;color:#d4edbc">Concluído</div><svg class="ic" style="left:187.00px;top:578.50px;width:8.4px;height:4.4px" viewBox="0 0 10 5" preserveAspectRatio="none" fill="#d4edbc"><path d="M0 0h10L5 5z"/></svg>
<div class="cell c" style="left:209px;top:542px;width:79px;height:47px;"><div><div class="ln">05/11/2025</div></div></div>
<div class="abs" style="left:297.1px;top:573.40px;width:98.00px;height:14.8px;border-radius:7.4px;background:#ffcfc9"></div><div class="ct" style="left:303px;width:72.40px;top:574px;color:#b10202">Professor</div><svg class="ic" style="left:381.30px;top:578.90px;width:8.4px;height:4.4px" viewBox="0 0 10 5" preserveAspectRatio="none" fill="#b10202"><path d="M0 0h10L5 5z"/></svg>
<div class="cell c" style="left:404px;top:542px;width:115px;height:47px;"><div><div class="ln">Stephanie Tiesen</div></div></div>
<div class="cell" style="left:520px;top:542px;width:204px;height:47px;"><div><div class="ln" style="margin-bottom:1px">Válvula de descarga com defeito,</div><div class="ln">fluxo constante, 2o andar Bloco B</div><div class="ln">ECV</div></div></div>
<div class="cell" style="left:725px;top:542px;width:203px;height:47px;"><div><div class="ln">CTC28 - ECV Bloco B</div></div></div>
<div class="cell" style="left:929px;top:542px;width:228px;height:47px;"><div><div class="ln"><a>SD 64767-2025 enviada ao SEXP/ECV</a></div></div></div>
<div class="cell r" style="left:1158px;top:542px;width:99px;height:47px;padding-right:2px;"><div><div class="ln">12/11/2025</div></div></div>
<div class="cell" style="left:1258px;top:542px;width:167px;height:47px;"><div><div class="ln" style="margin-bottom:1px">SEXP/ECV informou que</div><div class="ln">houve o reparo. SD arquivada</div><div class="ln">pela CGA.</div></div></div>
<div class="vl" style="left:1560px;top:589px;height:33px;background:rgba(0,0,0,0.118)"></div>
<div class="vl" style="left:1651px;top:589px;height:33px;background:rgba(0,0,0,0.118)"></div>
<div class="vl" style="left:1742px;top:589px;height:33px;background:rgba(0,0,0,0.118)"></div>
<div class="cell c" style="left:25px;top:590px;width:80px;height:32px;"><div><div class="ln">2025-00072</div></div></div>
<div class="abs" style="left:114px;top:606.00px;width:86.30px;height:14.8px;border-radius:7.4px;background:#ffe5a0"></div><div class="ct" style="left:119px;width:62.40px;top:607px;color:#473821">Em anda...</div><svg class="ic" style="left:187.00px;top:611.50px;width:8.4px;height:4.4px" viewBox="0 0 10 5" preserveAspectRatio="none" fill="#473821"><path d="M0 0h10L5 5z"/></svg>
<div class="cell r" style="left:209px;top:590px;width:79px;height:32px;"><div><div class="ln">10/11/2025</div></div></div>
<div class="abs" style="left:297.1px;top:606.40px;width:98.00px;height:14.8px;border-radius:7.4px;background:#ffe5a0"></div><div class="ct" style="left:303px;width:72.40px;top:607px;color:#473821">TAE</div><svg class="ic" style="left:381.30px;top:611.90px;width:8.4px;height:4.4px" viewBox="0 0 10 5" preserveAspectRatio="none" fill="#473821"><path d="M0 0h10L5 5z"/></svg>
<div class="cell" style="left:404px;top:590px;width:115px;height:32px;"><div><div class="ln">Moacir</div></div></div>
<div class="cell" style="left:520px;top:590px;width:204px;height:32px;"><div><div class="ln">Rompimento de torneira, térro,</div><div class="ln">próximo à sala D211</div></div></div>
<div class="cell" style="left:725px;top:590px;width:203px;height:32px;"><div><div class="ln">CCS05 - CCS Bloco D</div></div></div>
<div class="cell" style="left:929px;top:590px;width:228px;height:32px;"><div><div class="ln"><a>SD 065727/2025 enviada ao</a></div><div class="ln"><a>DRE/SEOMA</a></div></div></div>
<div class="cell r" style="left:1158px;top:590px;width:99px;height:32px;padding-right:2px;"><div><div class="ln">10/11/2025</div></div></div>
<div class="cell" style="left:1258px;top:590px;width:167px;height:32px;"><div><div class="ln">DRE/ARQ/HID - Solicitações</div><div class="ln">Atendidas PU/Hidráulica</div></div></div>
<div class="cell r" style="left:1426px;top:590px;width:134px;height:32px;"><div><div class="ln">13</div></div></div>
<div class="vl" style="left:1560px;top:622px;height:5px;background:rgba(0,0,0,0.118)"></div>
<div class="vl" style="left:1651px;top:622px;height:5px;background:rgba(0,0,0,0.118)"></div>
<div class="vl" style="left:1742px;top:622px;height:5px;background:rgba(0,0,0,0.118)"></div>
<div class="abs" style="left:24px;top:171px;width:1821px;height:1px;background:#188038"></div>
<div class="abs" style="left:24px;top:147px;width:82px;height:24.400px;background:#fff;box-shadow:inset 0 0 0 1.400px #1a73e8"></div>
<div class="abs" style="left:102.900px;top:168.700px;width:7.400px;height:7.400px;border-radius:4px;background:#1a66d9;box-shadow:0 0 0 .700px #fff"></div>
<div id="chrome">
<svg class="ic" style="left:2.100px;top:11.900px;width:23px;height:31.100px" viewBox="0 0 23 31.100">
<path d="M2.300 0H15.200l7.800 7.800v21a2.300 2.300 0 0 1-2.300 2.300H2.300A2.300 2.300 0 0 1 0 28.800V2.300A2.300 2.300 0 0 1 2.300 0z" fill="#00ac47"/>
<path d="M15.200 0l7.800 7.800h-5.800a2 2 0 0 1-2-2z" fill="#00832d"/>
<path d="M4 12.200h14.900V23H4zm1.500 1.500v3.100h5.200v-3.100zm6.700 0v3.100h5.200v-3.100zm-6.700 4.600v3.200h5.200v-3.200zm6.700 0v3.200h5.200v-3.200z" fill="#fff" fill-rule="evenodd"/>
</svg>
<div class="t" id="title" style="left:37.2px;top:10px;font-size:15.4px;line-height:18.48px;color:#1f1f1f;letter-spacing:0.228px;">1-2-2 Gestão das Águas - Solicitações UFSC e Chamados à CASAN</div>
<svg class="ic" style="left:540px;top:12.5px;width:13.50px;height:13.10px" viewBox="2 2 20 19" preserveAspectRatio="none" fill="#444746"><path d="M22 9.24l-7.19-.62L12 2 9.19 8.63 2 9.24l5.46 4.73L5.82 21 12 17.27 18.18 21l-1.63-7.03L22 9.24zM12 15.4l-3.76 2.27 1-4.28-3.32-2.88 4.38-.38L12 6.1l1.71 4.04 4.38.38-3.32 2.88 1 4.28L12 15.4z"/></svg>
<svg class="ic" style="left:560px;top:8px;width:30px;height:22px" viewBox="560 8 30 22" fill="none" stroke="#444746" stroke-width="1.400" stroke-linejoin="round">
<path d="M568.800 15.200v7.800a1 1 0 0 0 1 1h11.400a1 1 0 0 0 1-1v-5.800a1 1 0 0 0-1-1h-6l-1.500-1.600h-3.900a1 1 0 0 0-1 1z"/>
<path d="M568.800 14.300h5.200l1.600 1.900h-6.800z" fill="#444746" stroke-width="0.800"/>
<path d="M572.400 20h3.200" stroke-width="1.500"/><path d="M575.300 17.600l3 2.400-3 2.400z" fill="#444746" stroke="none"/>
</svg>
<svg class="ic" style="left:596px;top:14px;width:16.40px;height:10.80px" viewBox="0 4 24 16" preserveAspectRatio="none" fill="#444746"><path d="M19.35 10.04C18.67 6.59 15.64 4 12 4 9.11 4 6.6 5.64 5.35 8.04 2.34 8.36 0 10.91 0 14c0 3.31 2.69 6 6 6h13c2.76 0 5-2.24 5-5 0-2.64-2.05-4.78-4.65-4.96zM19 18H6c-2.21 0-4-1.79-4-4 0-2.05 1.53-3.76 3.56-3.97l1.07-.11.5-.95C8.08 7.14 9.94 6 12 6c2.62 0 4.88 1.86 5.39 4.43l.3 1.5 1.53.11c1.56.1 2.78 1.41 2.78 2.96 0 1.65-1.35 3-3 3zm-9-3.82l-2.09-2.09L6.5 13.5 10 17l6.01-6.01-1.41-1.41z"/></svg>
<div class="t" id="m0" style="left:39.2px;top:32px;font-size:12.6px;line-height:15.12px;color:#1f1f1f;letter-spacing:0.197px;">Arquivo</div>
<div class="t" id="m1" style="left:98.5px;top:32px;font-size:12.6px;line-height:15.12px;color:#1f1f1f;letter-spacing:0.214px;">Editar</div>
<div class="t" id="m2" style="left:147.4px;top:32px;font-size:12.6px;line-height:15.12px;color:#1f1f1f;letter-spacing:0.195px;">Ver</div>
<div class="t" id="m3" style="left:182px;top:32px;font-size:12.6px;line-height:15.12px;color:#1f1f1f;letter-spacing:0.142px;">Inserir</div>
<div class="t" id="m4" style="left:233.8px;top:32px;font-size:12.6px;line-height:15.12px;color:#1f1f1f;letter-spacing:0.224px;">Formatar</div>
<div class="t" id="m5" style="left:302.5px;top:32px;font-size:12.6px;line-height:15.12px;color:#1f1f1f;letter-spacing:0.015px;">Dados</div>
<div class="t" id="m6" style="left:354px;top:32px;font-size:12.6px;line-height:15.12px;color:#1f1f1f;letter-spacing:0.18px;">Ferramentas</div>
<div class="t" id="m7" style="left:442.8px;top:32px;font-size:12.6px;line-height:15.12px;color:#1f1f1f;letter-spacing:0.085px;">Extensões</div>
<div class="t" id="m8" style="left:517.6px;top:32px;font-size:12.6px;line-height:15.12px;color:#1f1f1f;letter-spacing:0.175px;">Ajuda</div>
<div class="t" id="m9" style="left:565.7px;top:32px;font-size:12.6px;line-height:15.12px;color:#1f1f1f;letter-spacing:0.13px;">Pedir ao Gemini</div>
<svg class="ic" style="left:1444.830px;top:12.730px;width:23.730px;height:23.730px" viewBox="0 -960 960 960" fill="#444746"><path d="M480-120q-138 0-240.500-91.500T122-440h82q14 104 92.500 172T480-200q117 0 198.500-81.500T760-480q0-117-81.500-198.500T480-760q-69 0-129 32t-101 88h110v80H120v-240h80v94q51-64 124.500-99T480-840q75 0 140.500 28.500t114 77q48.500 48.500 77 114T840-480q0 75-28.500 140.500t-77 114q-48.500 48.500-114 77T480-120Zm112-192L440-464v-216h80v184l128 128-56 56Z"/></svg>
<svg class="ic" style="left:1492.2px;top:16.7px;width:17.80px;height:17.50px" viewBox="2 2 20 20" preserveAspectRatio="none" fill="#444746"><path d="M21.99 4c0-1.1-.89-2-1.99-2H4c-1.1 0-2 .9-2 2v12c0 1.1.9 2 2 2h14l4 4-.01-18zM20 4v13.17L18.83 16H4V4h16zM6 12h12v2H6zm0-3h12v2H6zm0-3h12v2H6z"/></svg>
<svg class="ic" style="left:0;top:0;width:1849px;height:56px" viewBox="0 0 1849 56" fill="none" stroke="#444746">
<path d="M1546.300 19.300h7.300a1.500 1.500 0 0 1 1.500 1.500v9.100a1.500 1.500 0 0 1-1.500 1.500h-9.400a1.500 1.500 0 0 1-1.500-1.500v-6.700z" stroke-width="1.800" stroke-linejoin="round"/>
<path d="M1555.800 25.400l4.300-4.500v9z" fill="#444746" stroke="none"/>
</svg>
<svg class="ic" style="left:1570.10px;top:22.85px;width:5.8px;height:2.9px" viewBox="0 0 10 5" preserveAspectRatio="none" fill="#444746"><path d="M0 0h10L5 5z"/></svg>
<div class="abs" style="left:1596px;top:7px;width:158px;height:36px;border-radius:18px;background:#c2e7ff"></div>
<div class="abs" style="left:1723.600px;top:7px;width:1.300px;height:36px;background:#fdfeff"></div>
<svg class="ic" style="left:1613.5px;top:18.1px;width:13.60px;height:13.60px" viewBox="2 2 20 20" preserveAspectRatio="none" fill="#001d35"><path d="M12 2C6.48 2 2 6.48 2 12s4.48 10 10 10 10-4.48 10-10S17.52 2 12 2zm-1 17.93c-3.95-.49-7-3.85-7-7.930 0-.62.08-1.21.21-1.79L9 15v1c0 1.1.9 2 2 2v1.930zm6.9-2.54c-.26-.81-1-1.39-1.9-1.39h-1v-3c0-.55-.45-1-1-1H8v-2h2c.55 0 1-.45 1-1V7h2c1.1 0 2-.9 2-2v-.41c2.930 1.190 5 4.060 5 7.410 0 2.080-.8 3.970-2.100 5.390z"/></svg>
<div class="t" id="share" style="left:1635.8px;top:18px;font-size:12.6px;line-height:15.12px;color:#001d35;letter-spacing:0.631px;-webkit-text-stroke:0.22px #001d35;">Compartilhar</div>
<svg class="ic" style="left:1735.80px;top:23.90px;width:6.8px;height:3.4px" viewBox="0 0 10 5" preserveAspectRatio="none" fill="#001d35"><path d="M0 0h10L5 5z"/></svg>
<svg class="ic" style="left:1769.6px;top:15.7px;width:18.30px;height:18.20px" viewBox="1.5 1.5 21 21" preserveAspectRatio="none" fill="#444746"><path d="M12 1.5Q14.4 9.6 22.5 12Q14.4 14.4 12 22.5Q9.600 14.400 1.500 12Q9.600 9.600 12 1.500z"/></svg>
<svg class="ic" style="left:1804.700px;top:6.700px;width:36.400px;height:36.400px" viewBox="0 0 36 36">
<g fill="none" stroke-width="2">
<circle cx="18" cy="18" r="16.900" stroke="#ea4335" stroke-dasharray="31.600 74.600" transform="rotate(-154 18 18)"/>
<circle cx="18" cy="18" r="16.900" stroke="#4285f4" stroke-dasharray="28.300 77.900" transform="rotate(-47.600 18 18)"/>
<circle cx="18" cy="18" r="16.900" stroke="#34a853" stroke-dasharray="31 75.200" transform="rotate(47.900 18 18)"/>
<circle cx="18" cy="18" r="16.900" stroke="#fbbc04" stroke-dasharray="15.900 90.300" transform="rotate(152.400 18 18)"/>
</g>
<circle cx="18" cy="18" r="15.300" fill="#fff"/>
<circle cx="18" cy="18" r="14.500" fill="#2f4a9b"/>
<circle cx="19" cy="15.200" r="6" fill="none" stroke="#fff" stroke-width="0.800"/>
<circle cx="19" cy="15.200" r="4.700" fill="none" stroke="#fff" stroke-width="0.500"/>
<path d="M19.300 9.800c2 2.800 3.300 4.500 3.300 6.300a3.300 3.300 0 0 1-6.600 0c0-1.800 1.300-3.500 3.300-6.300z" fill="#fff"/>
<text x="18.500" y="26.600" font-size="2.600" fill="#fff" text-anchor="middle" font-family="Liberation Sans, sans-serif" font-weight="bold" textLength="22" lengthAdjust="spacingAndGlyphs">GESTÃO DAS ÁGUAS</text>
<path d="M8.500 27.500h20" stroke="#fff" stroke-width="0.350"/>
<text x="20.300" y="30.500" font-size="2.600" fill="#fff" text-anchor="middle" font-family="Liberation Sans, sans-serif" font-weight="bold">UFSC</text>
</svg>
<div class="abs" style="left:-4px;top:56px;width:1844.600px;height:36.900px;border-radius:18.450px;background:#f0f4f9"></div>
<div class="abs" style="left:4.600px;top:61.700px;width:90.500px;height:25.300px;border-radius:12.650px;background:#fff"></div>
<div class="t" id="menus" style="left:38.3px;top:67px;font-size:12.6px;line-height:15.12px;color:#444746;letter-spacing:0.116px;-webkit-text-stroke:0.180px #444746;">Menus</div>
<div class="t" id="zoom" style="left:221px;top:68px;font-size:12.6px;line-height:15.12px;color:#444746;letter-spacing:-0.032px;-webkit-text-stroke:0.180px #444746;">100%</div>
<svg class="ic" style="left:265.30px;top:73.35px;width:7.6px;height:3.9px" viewBox="0 0 10 5" preserveAspectRatio="none" fill="#444746"><path d="M0 0h10L5 5z"/></svg>
<div class="sep" style="left:284.2px"></div>
<div class="sep" style="left:437.1px"></div>
<div class="sep" style="left:533.1px"></div>
<div class="sep" style="left:621.1px"></div>
<div class="sep" style="left:745px"></div>
<div class="sep" style="left:852px"></div>
<div class="sep" style="left:1007px"></div>
<div class="t" id="rs" style="left:295.8px;top:68px;font-size:11.5px;line-height:13.8px;color:#444746;letter-spacing:-0.501px;-webkit-text-stroke:0.3px #444746;">R$</div>
<div class="t" id="pct" style="left:326.6px;top:68px;font-size:11.5px;line-height:13.8px;color:#444746;letter-spacing:-0.725px;-webkit-text-stroke:0.180px #444746;">%</div>
<div class="t" id="d0" style="left:352.8px;top:67px;font-size:10px;line-height:12.0px;color:#444746;letter-spacing:0.08px;-webkit-text-stroke:0.35px #444746;">.0</div>
<div class="t" id="d00" style="left:381.6px;top:67px;font-size:10px;line-height:12.0px;color:#444746;letter-spacing:0.333px;-webkit-text-stroke:0.35px #444746;">.00</div>
<div class="t" id="n123" style="left:411.9px;top:68px;font-size:10.8px;line-height:12.96px;color:#444746;letter-spacing:-0.873px;-webkit-text-stroke:0.180px #444746;">123</div>
<div class="t" id="padra" style="left:452.7px;top:67px;font-size:12.6px;line-height:15.12px;color:#444746;letter-spacing:-0.166px;-webkit-text-stroke:0.180px #444746;">Padrã...</div>
<svg class="ic" style="left:511.80px;top:72.95px;width:7.6px;height:3.9px" viewBox="0 0 10 5" preserveAspectRatio="none" fill="#444746"><path d="M0 0h10L5 5z"/></svg>
<div class="abs" style="left:562px;top:64px;width:31px;height:21px;border:1px solid #444746;border-radius:4px"></div>
<div class="t" id="fs" style="left:571.3px;top:68px;font-size:12.6px;line-height:15.12px;color:#444746;letter-spacing:-1.058px;-webkit-text-stroke:0.180px #444746;">10</div>
<svg class="ic" style="left:0;top:56px;width:1849px;height:40px" viewBox="0 56 1849 40" fill="none" stroke="#444746" stroke-width="1.400" stroke-linejoin="round">
<circle cx="19.650" cy="73.450" r="4.100" stroke-width="1.400"/><path d="M22.600 76.500l4.800 5.200" stroke-width="1.500"/>
<path d="M109.400 70.900l-3 3 3 3M106.800 73.900h5.600a3.250 3.250 0 0 1 0 6.500h-4.800"/>
<path d="M141.100 70.900l3 3-3 3M143.700 73.900h-5.600a3.250 3.250 0 0 0 0 6.500h4.800"/>
<path d="M164.900 72.200v-2.500h8.200v2.500M164.900 79h-2.500v-4.800a2 2 0 0 1 2-2h9.200a2 2 0 0 1 2 2v4.800h-2.500"/><rect x="164.900" y="76.600" width="8.200" height="4.500"/><circle cx="173.300" cy="74.500" r="0.500" fill="#444746" stroke-width="0.600"/>
<rect x="192.700" y="68.700" width="9.900" height="3.400" rx="0.800"/><path d="M192.700 70.400h-.700a.9.9 0 0 0-.9.900v2.300a.9.9 0 0 0 .9.900h6.200v3.800"/><rect x="196.600" y="78.300" width="3.300" height="4.400" rx="0.700"/>
<path d="M543.400 74.900h9.200M601.400 74.900h9.200M606 70.300v9.200" stroke-width="1.300"/>
<path d="M688.900 74.400h14.700" stroke-width="1.200"/><path d="M699.900 72.700c-.2-1.600-1.700-2.300-3.600-2.300-2 0-3.500.9-3.500 2.500M692.500 77.500c.2 1.700 1.800 2.500 3.800 2.500 2.100 0 3.700-.9 3.700-2.600 0-.8-.3-1.300-.8-1.700" stroke-width="1.500"/>
<rect x="789.100" y="69.900" width="10.900" height="10.500"/><path d="M794.550 69.900v10.500M789.100 75.150h10.900"/>
<g stroke="#b9bcbf" stroke-width="1.200"><path d="M817.600 72.400v-2.600h2.900M827.100 69.800h2.900v2.600M817.600 77.900v2.600h2.900M827.100 80.500h2.900v-2.600M817.300 75.150h4.600M820.200 73.300l1.900 1.850-1.900 1.850M830.300 75.150h-4.600M827.400 73.300l-1.900 1.850 1.900 1.850"/></g>
<path d="M862.500 69.600h13.300M862.500 72.400h9.800M862.500 75.150h13.300M862.500 77.900h9.800M862.500 80.700h13.300" stroke-width="1.300"/>
<path d="M905.900 69.200v8.500M902.300 74.600l3.600 3.600 3.600-3.600" stroke-width="1.500"/><path d="M900.300 80.800h11.100" stroke-width="1.600"/>
<path d="M937.600 69.700v10.600M942.800 69.700v2.300M942.800 78v2.300M940.400 75.100h7M944.900 72.300l2.800 2.800-2.800 2.800" stroke-width="1.500"/>
<path d="M973.900 79.600h11.300M983.100 77.500l2.300 2.100-2.300 2.100" stroke-width="1.300"/>
<path d="M1131.900 79.300v-9.700a1.200 1.200 0 0 1 1.200-1.200h9.700" stroke-width="1.300"/><rect x="1134.700" y="71.200" width="10.900" height="10.900" rx="1.200" stroke-width="1.300"/><rect x="1134.700" y="71.200" width="10.900" height="3.300" fill="#444746" stroke="none"/><path d="M1138.300 74.500v7.600M1141.950 74.500v7.600M1134.700 78.300h10.900" stroke-width="1.100"/>
<path d="M367.700 79.500h-6.600M363.300 77.400l-2.200 2.100 2.200 2.100M389 79.500h6.600M393.400 77.400l2.200 2.100-2.200 2.100" stroke-width="1.200"/>
</svg>
<svg class="ic" style="left:634.8px;top:70.1px;width:7.70px;height:9.40px" viewBox="7 4 10.75 14" preserveAspectRatio="none" fill="#444746"><path d="M15.6 10.79c.97-.67 1.65-1.77 1.65-2.79 0-2.26-1.75-4-4-4H7v14h7.04c2.09 0 3.71-1.7 3.71-3.79 0-1.52-.86-2.82-2.15-3.42zM10 6.5h3c.83 0 1.5.67 1.5 1.5s-.67 1.5-1.5 1.5h-3v-3zm3.5 9H10v-3h3.5c.83 0 1.5.67 1.5 1.5s-.67 1.5-1.5 1.5z"/></svg>
<svg class="ic" style="left:662.5px;top:70.1px;width:9.60px;height:9.70px" viewBox="6 4 12 14" preserveAspectRatio="none" fill="#444746"><path d="M10 4v3h2.21l-3.42 8H6v3h8v-3h-2.21l3.42-8H18V4z"/></svg>
<svg class="ic" style="left:722.1px;top:68.7px;width:8.20px;height:8.60px" viewBox="5.5 3 12.989999771118164 14" preserveAspectRatio="none" fill="#444746"><path d="M11 3L5.5 17h2.25l1.12-3h6.25l1.12 3h2.25L13 3h-2zm-1.38 9L12 5.67 14.38 12H9.62z"/></svg>
<div class="abs" style="left:716px;top:80px;width:21px;height:2.800px;background:#000"></div>
<svg class="ic" style="left:757px;top:65.1px;width:12.90px;height:11.30px" viewBox="2.997499942779541 0 18.002500534057617 17.000001907348633" preserveAspectRatio="none" fill="#444746"><path d="M16.56 8.94L7.62 0 6.21 1.41l2.38 2.38-5.15 5.15c-.59.59-.59 1.54 0 2.12l5.5 5.5c.29.29.68.44 1.06.44s.77-.15 1.06-.44l5.5-5.5c.59-.58.59-1.53 0-2.12zM5.21 10L10 5.21 14.79 10H5.21zM19 11.5s-2 2.17-2 3.5c0 1.1.9 2 2 2s2-.9 2-2c0-1.33-2-3.5-2-3.5z"/></svg>
<div class="abs" style="left:753px;top:80px;width:21px;height:2.800px;background:#fff"></div>
<svg class="ic" style="left:839.50px;top:73.05px;width:7.6px;height:3.9px" viewBox="0 0 10 5" preserveAspectRatio="none" fill="#b9bcbf"><path d="M0 0h10L5 5z"/></svg>
<svg class="ic" style="left:881.00px;top:73.25px;width:7.6px;height:3.9px" viewBox="0 0 10 5" preserveAspectRatio="none" fill="#444746"><path d="M0 0h10L5 5z"/></svg>
<svg class="ic" style="left:917.90px;top:73.25px;width:7.6px;height:3.9px" viewBox="0 0 10 5" preserveAspectRatio="none" fill="#444746"><path d="M0 0h10L5 5z"/></svg>
<svg class="ic" style="left:954.90px;top:73.25px;width:7.6px;height:3.9px" viewBox="0 0 10 5" preserveAspectRatio="none" fill="#444746"><path d="M0 0h10L5 5z"/></svg>
<svg class="ic" style="left:992.20px;top:73.25px;width:7.6px;height:3.9px" viewBox="0 0 10 5" preserveAspectRatio="none" fill="#444746"><path d="M0 0h10L5 5z"/></svg>
<svg class="ic" style="left:975px;top:69.2px;width:9.10px;height:8.10px" viewBox="5.5 3 12.989999771118164 14" preserveAspectRatio="none" fill="#444746"><path d="M11 3L5.5 17h2.25l1.12-3h6.25l1.12 3h2.25L13 3h-2zm-1.38 9L12 5.67 14.38 12H9.62z"/></svg>
<svg class="ic" style="left:1017.7px;top:71.2px;width:14.40px;height:7.90px" viewBox="2 7 20 10" preserveAspectRatio="none" fill="#444746"><path d="M3.9 12c0-1.71 1.39-3.1 3.1-3.1h4V7H7c-2.76 0-5 2.24-5 5s2.24 5 5 5h4v-1.9H7c-1.71 0-3.1-1.39-3.1-3.1zM8 13h8v-2H8v2zm9-6h-4v1.9h4c1.71 0 3.1 1.39 3.1 3.1s-1.39 3.1-3.1 3.1h-4V17h4c2.76 0 5-2.24 5-5s-2.24-5-5-5z"/></svg>
<svg class="ic" style="left:1047px;top:68.1px;width:14.40px;height:14.10px" viewBox="2 2 20 20" preserveAspectRatio="none" fill="#444746"><path d="M2 4c0-1.1.9-2 2-2h16c1.1 0 2 .9 2 2v12c0 1.1-.9 2-2 2H6l-4 4V4zm2 13.17L5.17 16H20V4H4v13.17zM11 5h2v4h4v2h-4v4h-2v-4H7V9h4z"/></svg>
<svg class="ic" style="left:1076.8px;top:69.1px;width:12.90px;height:12.70px" viewBox="3 3 18 18" preserveAspectRatio="none" fill="#444746"><path d="M9 17H7v-7h2v7zm4 0h-2V7h2v10zm4 0h-2v-3h2v3zm2 2H5V5h14v14zm0-16H5c-1.1 0-2 .9-2 2v14c0 1.1.9 2 2 2h14c1.1 0 2-.9 2-2V5c0-1.1-.9-2-2-2z"/></svg>
<div class="abs" style="left:1098.200px;top:60.900px;width:27.900px;height:27.100px;border-radius:4px;background:#d3e3fd"></div>
<svg class="ic" style="left:1106.6px;top:69.8px;width:11.60px;height:11.00px" viewBox="4.038395881652832 3.9999985694885254 15.91127872467041 16.000001907348633" preserveAspectRatio="none" fill="#041e49"><path d="M4.25 5.61C6.27 8.2 10 13 10 13v6c0 .55.45 1 1 1h2c.55 0 1-.45 1-1v-6s3.72-4.8 5.74-7.39A.998.998 0 0 0 18.95 4H5.04c-.83 0-1.3.95-.79 1.61z"/></svg>
<svg class="ic" style="left:1151.50px;top:73.15px;width:7.6px;height:3.9px" viewBox="0 0 10 5" preserveAspectRatio="none" fill="#444746"><path d="M0 0h10L5 5z"/></svg>
<svg class="ic" style="left:1173.9px;top:69.8px;width:8.60px;height:10.60px" viewBox="6 4 12 16" preserveAspectRatio="none" fill="#444746"><path d="M18 4H6v2l6.5 6L6 18v2h12v-3h-7l5-5-5-5h7z"/></svg>
<svg class="ic" style="left:1805px;top:68px;width:20px;height:14px" viewBox="1805 68 20 14" fill="none" stroke="#444746" stroke-width="1.500"><path d="M1810.700 77.800l4.100-4.300 4.100 4.300"/></svg>
<div class="abs" style="left:0;top:99.800px;width:1841px;height:25.200px;background:#fff"></div>
<div class="t" id="a1" style="left:-4.8px;top:106px;font-size:11.2px;line-height:13.44px;color:#1f1f1f;letter-spacing:-0.87px;">A1</div>
<svg class="ic" style="left:60.05px;top:110.20px;width:8.1px;height:4px" viewBox="0 0 10 5" preserveAspectRatio="none" fill="#444746"><path d="M0 0h10L5 5z"/></svg>
<div class="t" id="fx" style="left:88.700px;top:104px;font-size:13px;line-height:16px;color:#80868b;font-style:italic;font-family:'Liberation Serif',serif;letter-spacing:-0.300px;transform:scaleX(1.400);transform-origin:0 0;-webkit-text-stroke:0.250px #80868b">fx</div>
<div class="abs" style="left:1695.200px;top:100.200px;width:145.400px;height:21.800px;border-radius:10.900px;background:#f0f4f9"></div>
<svg class="ic" style="left:1705.7px;top:104.7px;width:13.10px;height:13.10px" viewBox="1.5 1.5 21 21" preserveAspectRatio="none" fill="#1f1f1f"><path d="M12 1.5c.9 5.2 5.3 9.6 10.5 10.5-5.200.900-9.600 5.300-10.500 10.500-.900-5.200-5.300-9.600-10.500-10.500 5.200-.900 9.600-5.300 10.500-10.500z"/></svg>
<div class="t" id="resumir" style="left:1723.7px;top:103px;font-size:11.7px;line-height:14.04px;color:#1f1f1f;letter-spacing:-0.061px;-webkit-text-stroke:0.200px #1f1f1f;">Resumir esta tabela</div>
</div>
</div></body></html>
